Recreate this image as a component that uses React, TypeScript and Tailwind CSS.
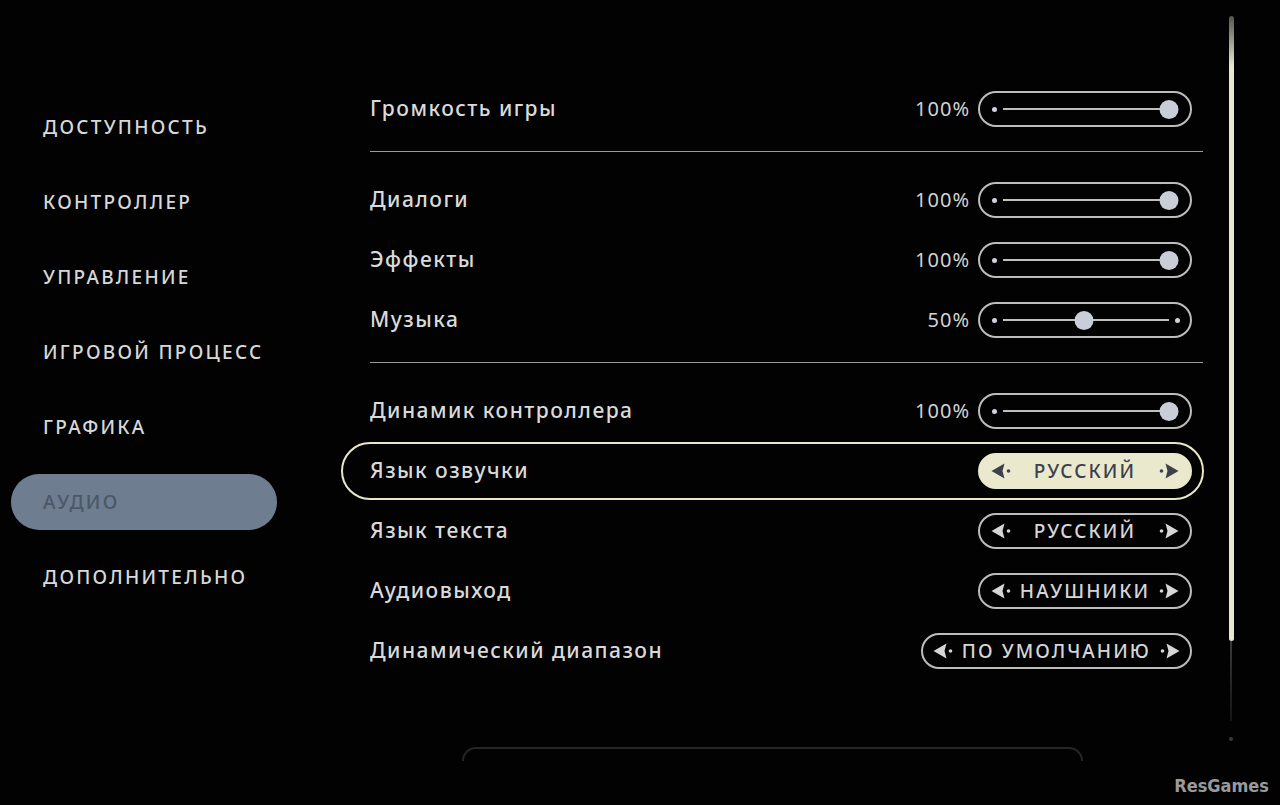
import React from "react";

const menu = [
  "ДОСТУПНОСТЬ",
  "КОНТРОЛЛЕР",
  "УПРАВЛЕНИЕ",
  "ИГРОВОЙ ПРОЦЕСС",
  "ГРАФИКА",
  "АУДИО",
  "ДОПОЛНИТЕЛЬНО",
];

type Row =
  | { kind: "slider"; label: string; value: number }
  | { kind: "select"; label: string; value: string; active?: boolean; wide?: boolean }
  | { kind: "divider" };

const rows: Row[] = [
  { kind: "slider", label: "Громкость игры", value: 100 },
  { kind: "divider" },
  { kind: "slider", label: "Диалоги", value: 100 },
  { kind: "slider", label: "Эффекты", value: 100 },
  { kind: "slider", label: "Музыка", value: 50 },
  { kind: "divider" },
  { kind: "slider", label: "Динамик контроллера", value: 100 },
  { kind: "select", label: "Язык озвучки", value: "РУССКИЙ", active: true },
  { kind: "select", label: "Язык текста", value: "РУССКИЙ" },
  { kind: "select", label: "Аудиовыход", value: "НАУШНИКИ" },
  { kind: "select", label: "Динамический диапазон", value: "ПО УМОЛЧАНИЮ", wide: true },
];

const font = { fontFamily: '"Noto Sans", "DejaVu Sans", sans-serif' };

function Arrow({ dir, dark }: { dir: "left" | "right"; dark?: boolean }) {
  const fill = dark ? "#3b414d" : "#d6d6d6";
  return (
    <svg width="21" height="16" viewBox="0 0 21 16" className="shrink-0">
      {dir === "left" ? (
        <>
          <path d="M0.5 8 L13.5 0.5 L11.5 8 L13.5 15.5 Z" fill={fill} />
          <circle cx="17.5" cy="8" r="1.8" fill={fill} />
        </>
      ) : (
        <>
          <circle cx="3.5" cy="8" r="1.8" fill={fill} />
          <path d="M20.5 8 L7.5 0.5 L9.5 8 L7.5 15.5 Z" fill={fill} />
        </>
      )}
    </svg>
  );
}

function Slider({ value }: { value: number }) {
  return (
    <div className="flex items-center gap-[8px]">
      <span className="text-[20px] tracking-[0.05em] text-[#d2d2d2]">{value}%</span>
      <div className="flex h-[36px] w-[214px] items-center rounded-full border-2 border-[#bdbdbd] pl-[12px] pr-[10px]">
        <span className="h-[5px] w-[5px] shrink-0 rounded-full bg-[#cfd3dc]" />
        <div className="relative ml-[6px] mr-[6px] h-[18px] flex-1">
          <div className="absolute left-0 right-0 top-[8px] h-[2px] bg-[#bfbfbf]" />
          <div
            className="absolute top-0 h-[19px] w-[19px] -translate-x-1/2 rounded-full bg-[#c9cdd8]"
            style={{ left: `${value === 100 ? 100 : value - 1}%` }}
          />
        </div>
        {value < 100 ? (
          <span className="h-[5px] w-[5px] shrink-0 rounded-full bg-[#cfd3dc]" />
        ) : (
          <span className="w-[5px] shrink-0" />
        )}
      </div>
    </div>
  );
}

function Select({ value, active, wide }: { value: string; active?: boolean; wide?: boolean }) {
  return (
    <div
      className={
        "flex h-[36px] items-center justify-between rounded-full border-2 " +
        (active
          ? "border-[#ebe9cd] bg-[#ebe9cd] text-[#3b414d]"
          : "border-[#bdbdbd] text-[#d6d6d6]") +
        (wide ? " gap-[8px] px-[10px]" : " w-[214px] px-[11px]")
      }
    >
      <Arrow dir="left" dark={active} />
      <span className="text-[19px] font-medium tracking-[0.11em]">{value}</span>
      <Arrow dir="right" dark={active} />
    </div>
  );
}

export default function App() {
  return (
    <div
      className="relative flex h-[805px] w-[1280px] overflow-hidden bg-[#020202] text-[#d9d9d9]"
      style={font}
    >
      {/* left menu */}
      <nav className="flex w-[341px] shrink-0 flex-col gap-[19px] pl-[11px] pt-[99px]">
        {menu.map((item) => {
          const active = item === "АУДИО";
          return (
            <div
              key={item}
              className={
                "flex h-[56px] w-[266px] items-center rounded-full pl-[32px] text-[19px] font-medium tracking-[0.12em] " +
                (active ? "bg-[#6e7d90] text-[#4b5768]" : "text-[#d8d8d8]")
              }
            >
              {item}
            </div>
          );
        })}
      </nav>

      {/* settings list */}
      <main className="flex w-[863px] shrink-0 flex-col pt-[79px]">
        {rows.map((row, i) => {
          if (row.kind === "divider") {
            return (
              <div key={i} className="mb-[18px] ml-[29px] mr-[1px] mt-[12px] h-px bg-[#9a9a9a]" />
            );
          }
          const active = row.kind === "select" && row.active;
          return (
            <div key={i} className="flex h-[60px] items-center">
              <div
                className={
                  "flex h-[58px] w-full items-center justify-between rounded-full border-2 pl-[27px] pr-[10px] " +
                  (active ? "border-[#e9e7c9]" : "border-transparent")
                }
              >
                <span className="text-[21px] font-medium tracking-[0.07em] text-[#dadada]">
                  {row.label}
                </span>
                {row.kind === "slider" ? (
                  <Slider value={row.value} />
                ) : (
                  <Select value={row.value} active={row.active} wide={row.wide} />
                )}
              </div>
            </div>
          );
        })}

        <div className="mx-auto mt-[66px] h-[14px] w-[621px] rounded-t-[14px] border-2 border-b-0 border-[#262626]" />
      </main>

      {/* scrollbar */}
      <div className="ml-[23px] flex w-[8px] flex-col items-center pt-[16px]">
        <div className="h-[625px] w-[5px] rounded-full bg-gradient-to-b from-[#555550] via-[#e9e8cf] via-[8%] to-[#e9e8cf]" />
        <div className="h-[80px] w-[2px] bg-gradient-to-b from-[#3a3a3a] to-[#151515]" />
        <div className="mt-[16px] h-[4px] w-[4px] rounded-full bg-[#3a3a3a]" />
      </div>

      <span
        className="absolute bottom-[6px] right-[11px] text-[18px] font-bold text-[#9a9a9a]"
        style={{ fontFamily: '"DejaVu Sans Condensed", "DejaVu Sans", sans-serif' }}
      >
        ResGames
      </span>
    </div>
  );
}
